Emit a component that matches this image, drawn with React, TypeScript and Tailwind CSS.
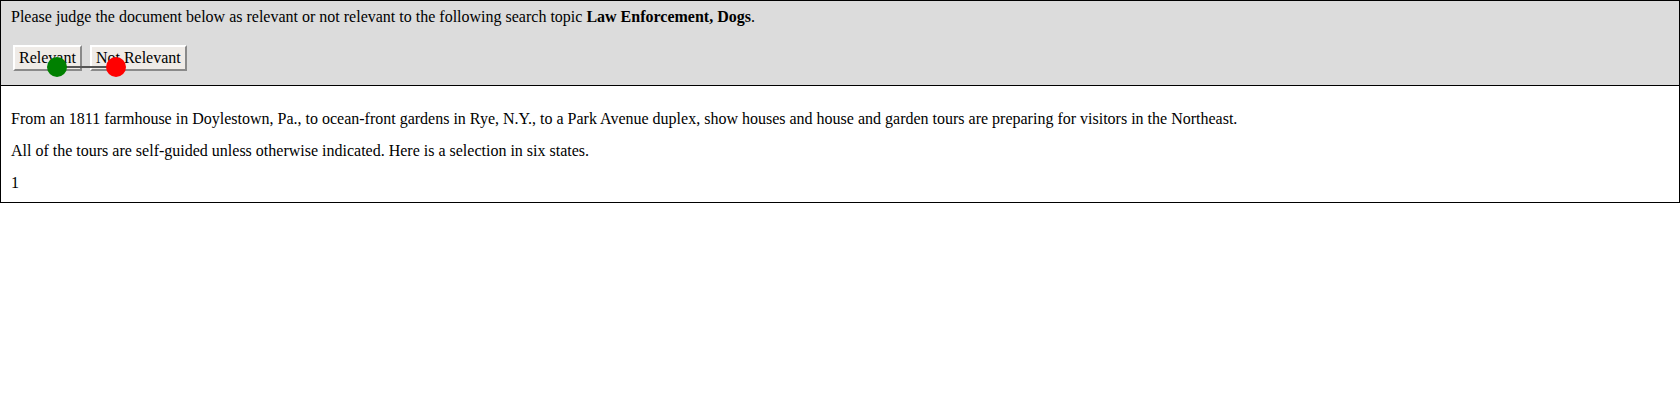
export default function App() {
  return (
    <div className="font-['Liberation_Serif','Times_New_Roman',serif] text-[16px] leading-[18px] text-black">
      <div className="border border-black bg-[#dcdcdc] px-[10px] pt-[7px] pb-[14px]">
        <div>
          Please judge the document below as relevant or not relevant to the following search topic{' '}
          <b>Law Enforcement, Dogs</b>.
        </div>
        <div className="relative mt-[19px] flex gap-[8px] pl-[2px]">
          <button className="h-[26px] border-2 border-t-white border-l-white border-r-[#8a8a8a] border-b-[#8a8a8a] bg-[#efebe7] px-[4px] leading-[20px]">
            Relevant
          </button>
          <button className="h-[26px] border-2 border-t-white border-l-white border-r-[#8a8a8a] border-b-[#8a8a8a] bg-[#efebe7] px-[4px] leading-[20px]">
            Not Relevant
          </button>
          <div className="absolute left-[46px] top-[21px] h-[2px] w-[58px] bg-[#555]" />
          <div className="absolute left-[36px] top-[12px] h-[20px] w-[20px] rounded-full bg-[#008000]" />
          <div className="absolute left-[95px] top-[12px] h-[20px] w-[20px] rounded-full bg-[#ff0000]" />
        </div>
      </div>
      <div className="-mt-px flex flex-col gap-[14px] border border-black px-[10px] pt-[24px] pb-[10px]">
        <p>
          From an 1811 farmhouse in Doylestown, Pa., to ocean-front gardens in Rye, N.Y., to a Park Avenue duplex, show houses and house and garden tours are preparing for visitors in the Northeast.
        </p>
        <p>All of the tours are self-guided unless otherwise indicated. Here is a selection in six states.</p>
        <p>1</p>
      </div>
    </div>
  );
}
